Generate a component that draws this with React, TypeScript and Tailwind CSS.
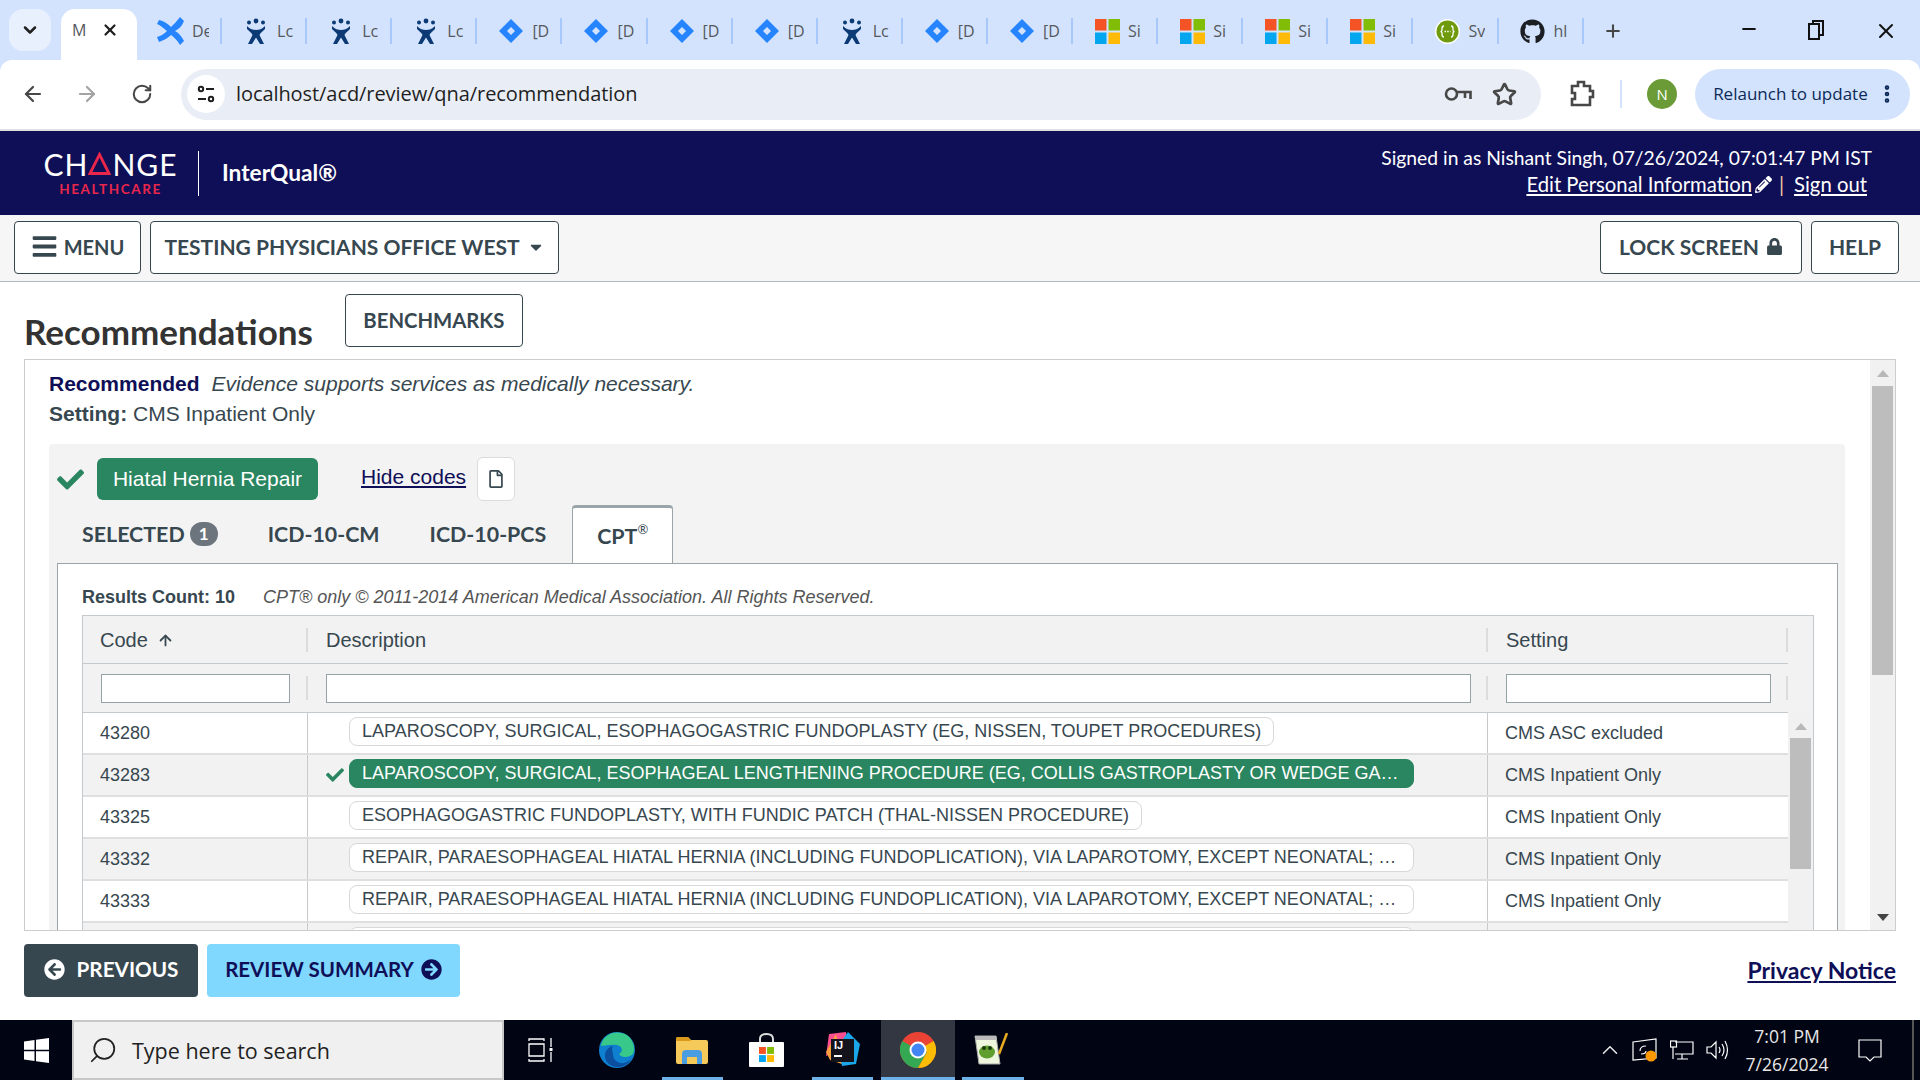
import {
  FaArrowCircleLeft,
  FaArrowCircleRight,
  FaBars,
  FaCaretDown,
  FaCheck,
  FaGithub,
  FaLock,
  FaPencilAlt,
  FaRegFile,
} from 'react-icons/fa';
import { ArrowLeft, ArrowRight, ChevronDown, MoreVertical, Plus, RotateCw, Star, X, Minus, ArrowUp, ChevronUp, Search } from 'lucide-react';

type IconKind = 'confluence' | 'figure' | 'jira' | 'ms' | 'swagger' | 'github';

const browserTabs: { icon: IconKind; label: string }[] = [
  { icon: 'confluence', label: 'De' },
  { icon: 'figure', label: 'Lc' },
  { icon: 'figure', label: 'Lc' },
  { icon: 'figure', label: 'Lc' },
  { icon: 'jira', label: '[D' },
  { icon: 'jira', label: '[D' },
  { icon: 'jira', label: '[D' },
  { icon: 'jira', label: '[D' },
  { icon: 'figure', label: 'Lc' },
  { icon: 'jira', label: '[D' },
  { icon: 'jira', label: '[D' },
  { icon: 'ms', label: 'Si' },
  { icon: 'ms', label: 'Si' },
  { icon: 'ms', label: 'Si' },
  { icon: 'ms', label: 'Si' },
  { icon: 'swagger', label: 'Sv' },
  { icon: 'github', label: 'hl' },
];

const repairText = 'REPAIR, PARAESOPHAGEAL HIATAL HERNIA (INCLUDING FUNDOPLICATION), VIA LAPAROTOMY, EXCEPT NEONATAL; WITHOUT IMPLANTATION OF MESH';

const rows = [
  { code: '43280', desc: 'LAPAROSCOPY, SURGICAL, ESOPHAGOGASTRIC FUNDOPLASTY (EG, NISSEN, TOUPET PROCEDURES)', setting: 'CMS ASC excluded' },
  { code: '43283', desc: 'LAPAROSCOPY, SURGICAL, ESOPHAGEAL LENGTHENING PROCEDURE (EG, COLLIS GASTROPLASTY OR WEDGE GASTROPLASTY)', setting: 'CMS Inpatient Only', selected: true, wide: true },
  { code: '43325', desc: 'ESOPHAGOGASTRIC FUNDOPLASTY, WITH FUNDIC PATCH (THAL-NISSEN PROCEDURE)', setting: 'CMS Inpatient Only' },
  { code: '43332', desc: repairText, setting: 'CMS Inpatient Only', wide: true },
  { code: '43333', desc: repairText, setting: 'CMS Inpatient Only', wide: true },
  { code: '43334', desc: repairText, setting: 'CMS Inpatient Only', wide: true },
];

function MsLogo({ size = 25 }: { size?: number }) {
  return (
    <svg width={size} height={size} viewBox="0 0 25 25">
      <rect width="11.5" height="11.5" fill="#f35325" />
      <rect x="13.5" width="11.5" height="11.5" fill="#81bc06" />
      <rect y="13.5" width="11.5" height="11.5" fill="#05a6f0" />
      <rect x="13.5" y="13.5" width="11.5" height="11.5" fill="#ffba08" />
    </svg>
  );
}

function Favicon({ kind }: { kind: IconKind }) {
  if (kind === 'ms') return <MsLogo />;
  if (kind === 'github') return <FaGithub className="text-[25px] text-[#1b1f23]" />;
  if (kind === 'jira') {
    return (
      <svg width="24" height="24" viewBox="0 0 24 24">
        <path d="M12 0 L24 12 L12 24 L0 12 Z" fill="#2684ff" />
        <path d="M12 8 L16 12 L12 16 L8 12 Z" fill="#d3e3fd" />
      </svg>
    );
  }
  if (kind === 'swagger') {
    return (
      <svg width="25" height="25" viewBox="0 0 25 25">
        <circle cx="12.5" cy="12.5" r="12.5" fill="#fff" />
        <circle cx="12.5" cy="12.5" r="11" fill="#6f9a0c" />
        <path d="M9 7 Q7 7 7 9.5 V11 Q7 12.5 5.5 12.5 Q7 12.5 7 14 V15.5 Q7 18 9 18 M16 7 Q18 7 18 9.5 V11 Q18 12.5 19.5 12.5 Q18 12.5 18 14 V15.5 Q18 18 16 18" fill="none" stroke="#fff" strokeWidth="1.3" />
        <path d="M9.5 12.5 H15.5" stroke="#fff" strokeWidth="1.5" strokeDasharray="1.5 1.2" />
      </svg>
    );
  }
  if (kind === 'figure') {
    return (
      <svg width="22" height="27" viewBox="0 0 22 27">
        <circle cx="11" cy="3" r="2.4" fill="#0b3a75" />
        <circle cx="4" cy="4.5" r="2" fill="#0b3a75" />
        <circle cx="18" cy="4.5" r="2" fill="#0b3a75" />
        <path d="M2 8 C5 11 8 12 11 12 C14 12 17 11 20 8 L20 11 C17 14 15 15 14.5 17 L19 26 H15 L11 19.5 L7 26 H3 L7.5 17 C7 15 5 14 2 11 Z" fill="#0b3a75" />
      </svg>
    );
  }
  return (
    <svg width="30" height="30" viewBox="0 0 30 30">
      <path d="M3 4 C8 5 12 8 15 11 C18 8 21 5 24 1 L28 5 C26 10 23 13 19 15 C23 17 26 21 28 25 L24 29 C21 24 18 21 15 19 C12 22 8 24 3 26 L1 21 C5 20 8 18 11 15 C7 12 4 9 1 8 Z" fill="#2684ff" />
    </svg>
  );
}

function BrowserTabs() {
  return (
    <div className="flex h-[60px] shrink-0 bg-[#d3e3fd] font-['Open_Sans',sans-serif] text-[16px] text-[#55585c]">
      <div className="ml-[9px] mt-[9px] flex h-[42px] w-[42px] items-center justify-center rounded-[14px] bg-[#e8f0fe]">
        <ChevronDown size={20} strokeWidth={3} className="text-[#1f1f1f]" />
      </div>
      <div className="ml-[10px] mt-[9px] flex h-[51px] w-[76px] items-start rounded-t-[14px] bg-white pl-[11px] pt-[9px]">
        <span>M</span>
        <X size={18} strokeWidth={3} className="ml-[15px] mt-[3px] text-[#1f1f1f]" />
      </div>
      <div className="flex pt-[18px]">
        {browserTabs.map((tab, i) => (
          <div key={i} className="flex h-[26px] w-[85.1px] items-center border-r-2 border-[#a8c7fa] pl-[19px]">
            <span className="flex w-[30px] shrink-0 justify-center">
              <Favicon kind={tab.icon} />
            </span>
            <span className="ml-[6px] w-[17px] overflow-hidden whitespace-nowrap">{tab.label}</span>
          </div>
        ))}
      </div>
      <Plus size={20} strokeWidth={2.5} className="ml-[19px] mt-[21px] text-[#444746]" />
      <div className="ml-auto flex pt-[19px]">
        <Minus size={20} strokeWidth={2.5} className="text-[#111]" />
        <svg width="20" height="22" viewBox="0 0 20 22" className="ml-[47px]" fill="none" stroke="#111" strokeWidth="2">
          <rect x="3" y="5" width="10" height="15" />
          <path d="M7 5 V2 H17 V16 H13" />
        </svg>
        <X size={24} strokeWidth={2} className="ml-[48px] mr-[22px] text-[#111]" />
      </div>
    </div>
  );
}

function BrowserToolbar() {
  return (
    <div className="shrink-0 bg-[#d3e3fd]">
      <div className="flex h-[69px] items-center rounded-t-[12px] bg-white pb-[1px] font-['Open_Sans',sans-serif] text-[#1f1f1f]">
        <ArrowLeft size={24} strokeWidth={2.2} className="ml-[21px] text-[#474747]" />
        <ArrowRight size={24} strokeWidth={2.2} className="ml-[30px] text-[#a3a3a3]" />
        <RotateCw size={22} strokeWidth={2.2} className="ml-[32px] text-[#474747]" />
        <div className="ml-[28px] flex h-[51px] w-[1361px] items-center rounded-full bg-[#e9eef6]">
          <div className="ml-[6px] flex h-[38px] w-[38px] items-center justify-center rounded-full bg-white">
            <svg width="20" height="20" viewBox="0 0 20 20" fill="none" stroke="#1f1f1f" strokeWidth="2">
              <circle cx="5" cy="5" r="2.2" />
              <path d="M10 5 H18 M2 15 H10" />
              <circle cx="15" cy="15" r="2.2" />
            </svg>
          </div>
          <span className="ml-[11px] text-[20px] tracking-[-0.07px]">localhost/acd/review/qna/recommendation</span>
          <svg width="28" height="16" viewBox="0 0 28 16" fill="none" stroke="#474747" strokeWidth="2.6" className="ml-auto mr-[20px]">
            <circle cx="7.5" cy="8" r="5.5" />
            <path d="M13 6 H26.5 V13 M21 7 V12" />
          </svg>
          <Star size={25} strokeWidth={2.6} className="mr-[24px] text-[#474747]" />
        </div>
        <svg width="26" height="28" viewBox="0 0 26 28" className="ml-[28px]" fill="none" stroke="#474747" strokeWidth="2.6">
          <path d="M3 6 H9 V2 H15 V6 H21 V11 H24 V17 H21 V25 H3 V19 H6 V13 H3 Z" />
        </svg>
        <div className="ml-[25px] h-[28px] w-[2px] bg-[#d3e3fd]" />
        <div className="ml-[25px] flex h-[30px] w-[30px] items-center justify-center rounded-full bg-[#6a9b36] text-[15px] text-white">N</div>
        <div className="ml-[18px] flex h-[51px] w-[215px] items-center rounded-full bg-[#d3e3fd] pl-[18px] text-[17px] text-[#0b2a57]">
          <span>Relaunch to update</span>
          <MoreVertical size={22} strokeWidth={3} className="ml-auto mr-[12px]" />
        </div>
        <div className="w-[10px]" />
      </div>
      <div className="h-[2px] bg-[#e0e0e0]" />
    </div>
  );
}

function AppHeader() {
  return (
    <header className="flex h-[84px] shrink-0 items-center bg-[#0f0f57] pl-[44px] font-['Lato',sans-serif] text-white">
      <div className="flex w-[133px] flex-col items-center">
        <div className="flex h-[26px] items-center text-[30px] leading-none tracking-[1px]">
          <span>CH</span>
          <svg width="23" height="23" viewBox="0 0 23 23" className="mr-[1px]" fill="none" stroke="#e8274a" strokeWidth="2.8">
            <path d="M11.5 2.5 L21 21.5 H2 Z" />
          </svg>
          <span>NGE</span>
        </div>
        <span className="mt-[5px] text-[13.5px] font-bold leading-[14px] tracking-[1.6px] text-[#e8274a]">HEALTHCARE</span>
      </div>
      <div className="ml-[21px] h-[45px] w-px bg-white" />
      <span className="ml-[23px] text-[22.7px] font-bold">InterQual®</span>
      <div className="ml-auto mr-[48px] flex flex-col items-end pb-[4px] text-[19.3px] leading-[26px]">
        <span>Signed in as Nishant Singh, 07/26/2024, 07:01:47 PM IST</span>
        <div className="mr-[5px] flex items-center text-[20.3px]">
          <span className="underline">Edit Personal Information</span>
          <FaPencilAlt className="ml-[3px] text-[17px]" />
          <span className="ml-[7px] mr-[10px] text-[#f0c9a0]">|</span>
          <span className="underline">Sign out</span>
        </div>
      </div>
    </header>
  );
}

function NavButton({ children, className }: { children: React.ReactNode; className: string }) {
  return (
    <button className={`flex h-[53px] items-center justify-center rounded-[4px] border border-[#37474f] bg-white pb-[2px] text-[21px] font-bold text-[#37474f] ${className}`}>
      {children}
    </button>
  );
}

function NavBar() {
  return (
    <nav className="flex h-[67px] shrink-0 items-center border-b border-[#b0b8bc] bg-[#f6f6f6] pb-[1px] font-['Lato',sans-serif]">
      <NavButton className="ml-[14px] w-[127px]">
        <FaBars className="mr-[6px] text-[27px]" />
        <span className="text-[20px]">MENU</span>
      </NavButton>
      <NavButton className="ml-[9px] w-[409px]">
        TESTING PHYSICIANS OFFICE WEST
        <FaCaretDown className="ml-[7px] text-[18px]" />
      </NavButton>
      <NavButton className="ml-auto w-[202px]">
        LOCK SCREEN
        <FaLock className="ml-[7px] text-[17px]" />
      </NavButton>
      <NavButton className="ml-[9px] mr-[21px] w-[88px]">HELP</NavButton>
    </nav>
  );
}

function InnerScrollbar() {
  return (
    <div className="h-[270px] w-[25px] shrink-0 bg-[#f1f1f1]">
      <div className="mx-auto mt-[10px] h-0 w-0 border-x-[6px] border-b-[7px] border-x-transparent border-b-[#b8b8b8]" />
      <div className="mx-auto mt-[8px] h-[131px] w-[21px] bg-[#bdbdbd]" />
    </div>
  );
}

function ResultsTable() {
  return (
    <div className="ml-[24px] mr-[23px] mt-[5px] border border-b-0 border-[#c3c9cc] bg-[#f2f2f2] font-['Liberation_Sans',sans-serif] text-[18px] text-[#37474f]">
      <div className="mr-[25px] flex h-[48px] items-center border-b border-[#c3c9cc] text-[20px]">
        <div className="flex h-[24px] w-[225px] items-center border-r-2 border-[#dcdcdc] pl-[17px]">
          Code
          <ArrowUp size={17} strokeWidth={2.5} className="ml-[9px] mt-[1px]" />
        </div>
        <div className="flex h-[24px] w-[1180px] items-center border-r-2 border-[#dcdcdc] pl-[18px]">Description</div>
        <div className="flex h-[24px] w-[300px] items-center border-r-2 border-[#dcdcdc] pl-[18px]">Setting</div>
      </div>
      <div className="mr-[25px] flex h-[49px] items-center border-b border-[#c3c9cc]">
        <div className="flex h-[24px] w-[225px] items-center border-r-2 border-[#dcdcdc] pl-[18px]">
          <div className="h-[29px] w-[189px] shrink-0 border border-[#93a3a6] bg-white" />
        </div>
        <div className="flex h-[24px] w-[1180px] items-center border-r-2 border-[#dcdcdc] pl-[18px]">
          <div className="h-[29px] w-[1145px] shrink-0 border border-[#93a3a6] bg-white" />
        </div>
        <div className="flex h-[24px] w-[300px] items-center border-r-2 border-[#dcdcdc] pl-[18px]">
          <div className="h-[29px] w-[265px] shrink-0 border border-[#93a3a6] bg-white" />
        </div>
      </div>
      <div className="flex">
        <div>
          {rows.map((row, i) => (
            <div key={row.code} className={`flex h-[42px] w-[1705px] border-b-2 border-[#dfdfdf] ${i % 2 === 0 ? 'bg-white' : 'bg-[#f2f2f2]'}`}>
              <div className="w-[225px] border-r border-[#c9c9c9] pl-[17px] pt-[7px] leading-[27px]">{row.code}</div>
              <div className="flex w-[1180px] items-start border-r border-[#c9c9c9] pl-[18px] pt-[4px]">
                <span className="w-[23px] pt-[7px] text-[18px] text-[#2a8660]">{row.selected && <FaCheck />}</span>
                <span
                  className={`truncate rounded-[8px] border px-[12px] leading-[27px] ${row.wide ? 'w-[1065px]' : ''} ${
                    row.selected ? 'border-[#2a8660] bg-[#2a8660] text-white' : 'border-[#d8d8d8] bg-white'
                  }`}
                >
                  {row.desc}
                </span>
              </div>
              <div className="w-[300px] pl-[17px] pt-[7px] leading-[27px]">{row.setting}</div>
            </div>
          ))}
        </div>
        <InnerScrollbar />
      </div>
    </div>
  );
}

function Recommendations() {
  return (
    <div className="h-[570px] min-w-0 flex-1 overflow-hidden pl-[24px] pr-[25px] pt-[9px] font-['Liberation_Sans',sans-serif] text-[21px] leading-[30px] text-[#37474f]">
      <p>
        <strong className="text-[#0f0f57]">Recommended</strong>
        <em className="ml-[12px]">Evidence supports services as medically necessary.</em>
      </p>
      <p>
        <strong>Setting:</strong> CMS Inpatient Only
      </p>
      <div className="mt-[15px] rounded-[4px] bg-[#f3f3f3] pl-[8px] pr-[7px] pt-[13px]">
        <div className="flex h-[44px] items-center">
          <FaCheck className="text-[27px] text-[#2a8660]" />
          <span className="ml-[13px] flex h-[42px] w-[221px] items-center justify-center rounded-[6px] bg-[#2a8660] text-white">Hiatal Hernia Repair</span>
          <a className="ml-[43px] mb-[4px] text-[#0f0f57] underline">Hide codes</a>
          <span className="ml-[11px] flex h-[44px] w-[38px] items-center justify-center rounded-[6px] border border-[#dcdcdc] bg-white">
            <FaRegFile className="text-[18px] text-[#37474f]" />
          </span>
        </div>
        <div className="relative z-10 -mb-px mt-[5px] flex h-[58px] items-center pb-[2px] pl-[25px] font-['Lato',sans-serif] text-[21.4px] font-bold">
          <span>SELECTED</span>
          <span className="ml-[5px] flex h-[24px] w-[28px] items-center justify-center rounded-full bg-[#6c757d] text-[17px] text-white">1</span>
          <span className="ml-[50px]">ICD-10-CM</span>
          <span className="ml-[50px]">ICD-10-PCS</span>
          <span className="ml-[26px] flex h-[58px] w-[101px] items-center justify-center rounded-t-[4px] border border-b-0 border-[#9aa5a9] border-t-[3px] bg-white">
            CPT<sup className="text-[13px] font-normal">®</sup>
          </span>
        </div>
        <div className="h-[400px] border border-[#9aa5a9] bg-white pt-[20px]">
          <div className="flex items-center pl-[24px] text-[18px] leading-[26px]">
            <strong>Results Count: 10</strong>
            <em className="ml-[28px] text-[#555]">CPT® only © 2011-2014 American Medical Association. All Rights Reserved.</em>
          </div>
          <ResultsTable />
        </div>
      </div>
    </div>
  );
}

function OuterScrollbar() {
  return (
    <div className="w-[25px] shrink-0 bg-[#f1f1f1]">
      <div className="mx-auto mt-[10px] h-0 w-0 border-x-[6px] border-b-[7px] border-x-transparent border-b-[#b8b8b8]" />
      <div className="mx-auto mt-[9px] h-[289px] w-[21px] bg-[#bdbdbd]" />
      <div className="mx-auto mt-[239px] h-0 w-0 border-x-[6px] border-t-[7px] border-x-transparent border-t-[#444]" />
    </div>
  );
}

function MainContent() {
  return (
    <main className="flex min-h-0 flex-1 flex-col bg-white px-[24px]">
      <div className="flex h-[77px] shrink-0 items-start">
        <h1 className="mt-[30px] font-['Lato',sans-serif] text-[35px] font-bold leading-[38px] text-[#333]">Recommendations</h1>
        <button className="ml-[32px] mt-[12px] h-[53px] w-[178px] rounded-[4px] border border-[#37474f] pb-[1px] font-['Lato',sans-serif] text-[20.3px] font-bold text-[#37474f]">BENCHMARKS</button>
      </div>
      <div className="flex h-[572px] shrink-0 border border-[#cccccc]">
        <Recommendations />
        <OuterScrollbar />
      </div>
      <div className="mt-[13px] flex items-center font-['Lato',sans-serif] text-[21px] font-bold">
        <button className="flex h-[53px] w-[174px] items-center justify-center rounded-[4px] bg-[#37474f] pb-[2px] text-[20.7px] text-white">
          <FaArrowCircleLeft className="mr-[12px] text-[21px]" />
          PREVIOUS
        </button>
        <button className="ml-[9px] flex h-[53px] w-[253px] items-center justify-center rounded-[4px] bg-[#80d8ff] pb-[2px] text-[20.5px] text-[#0f0f57]">
          REVIEW SUMMARY
          <FaArrowCircleRight className="ml-[7px] text-[21px]" />
        </button>
        <a className="ml-auto text-[23px] text-[#0f0f57] underline">Privacy Notice</a>
      </div>
    </main>
  );
}

function ChromeIcon() {
  return (
    <svg width="36" height="36" viewBox="0 0 36 36">
      <circle cx="18" cy="18" r="18" fill="#ea4335" />
      <path d="M18 18 L2.4 9 A18 18 0 0 0 18 36 L27 20 Z" fill="#34a853" />
      <path d="M18 18 L33.6 9 A18 18 0 0 1 18 36 L27 20 Z" fill="#fbbc04" />
      <circle cx="18" cy="18" r="8.5" fill="#fff" />
      <circle cx="18" cy="18" r="6.5" fill="#4285f4" />
    </svg>
  );
}

function Taskbar() {
  return (
    <footer className="flex h-[60px] shrink-0 items-stretch bg-[#010412] font-['Open_Sans',sans-serif] text-white">
      <div className="flex w-[72px] items-center justify-center">
        <svg width="25" height="25" viewBox="0 0 25 25" fill="#fff">
          <path d="M0 3.5 L10.5 2 V11.8 H0 Z M12 1.8 L25 0 V11.8 H12 Z M0 13.2 H10.5 V23 L0 21.5 Z M12 13.2 H25 V25 L12 23.2 Z" />
        </svg>
      </div>
      <div className="flex w-[432px] items-center border-2 border-[#c8c8c8] bg-[#f0f0f0] pl-[14px] text-[21.5px] text-[#222]">
        <Search size={30} strokeWidth={1.4} className="-scale-x-100" />
        <span className="ml-[14px] pt-[2px]">Type here to search</span>
      </div>
      <div className="relative flex w-[528px] items-center">
        <svg width="25" height="24" viewBox="0 0 25 24" fill="none" stroke="#fff" strokeWidth="1.3" className="absolute left-[24px]">
          <path d="M1 3 V1 H16 V3 M1 21 V23 H16 V21 M1 6 H16 V18 H1 Z M23 0 V9 M23 14 V24" />
          <rect x="21.5" y="10" width="3" height="3" fill="#fff" stroke="none" />
        </svg>
        <svg width="36" height="36" viewBox="0 0 36 36" className="absolute left-[95px]">
          <circle cx="18" cy="18" r="18" fill="#0f7fd0" />
          <path d="M2 14 C4 2 16 -2 26 2 C34 6 37 16 34 22 C30 26 22 26 20 22 C24 20 24 14 18 13 C10 12 5 14 2 14 Z" fill="#38c98a" />
          <path d="M14 22 C14 32 26 34 32 27 C28 36 14 38 8 30 C4 24 6 16 14 14 C12 17 14 20 14 22 Z" fill="#0b4f9e" />
        </svg>
        <svg width="32" height="27" viewBox="0 0 32 27" className="absolute left-[172px]">
          <path d="M0 2 Q0 0 2 0 H12 L15 3 H30 Q32 3 32 5 V25 Q32 27 30 27 H2 Q0 27 0 25 Z" fill="#f6c95b" />
          <path d="M0 2 Q0 0 2 0 H12 L15 4 H0 Z" fill="#d99a1c" />
          <path d="M6 27 V17 Q6 13 10 13 H22 Q26 13 26 17 V27 H21 V20 H11 V27 Z" fill="#4a9de0" />
        </svg>
        <svg width="35" height="34" viewBox="0 0 35 34" className="absolute left-[245px]">
          <path d="M11 9 V6 Q11 1 17.5 1 Q24 1 24 6 V9" fill="none" stroke="#ddd" strokeWidth="2" />
          <rect y="9" width="35" height="25" rx="1" fill="#fff" />
          <g transform="translate(10 14)">
            <MsLogo size={15} />
          </g>
        </svg>
        <svg width="36" height="36" viewBox="0 0 36 36" className="absolute left-[320px]">
          <path d="M5 2 L22 0 L24 14 L2 24 Z" fill="#fc4f8d" />
          <path d="M2 20 L12 2 L18 32 L6 28 Z" fill="#f9a03f" />
          <path d="M24 0 L36 12 L32 32 L18 34 L14 14 Z" fill="#1aa6e8" />
        </svg>
        <div className="absolute left-[327px] top-[19px] flex h-[23px] w-[23px] flex-col bg-[#14121a] pl-[3px] font-['Liberation_Sans',sans-serif] text-[11px] font-bold leading-[13px] text-white">
          <span>IJ</span>
          <span className="mt-[3px] h-[2px] w-[8px] bg-white" />
        </div>
        <div className="absolute left-[377px] top-0 flex h-full w-[74px] items-center justify-center bg-[#333741]">
          <ChromeIcon />
        </div>
        <svg width="34" height="34" viewBox="0 0 34 34" className="absolute left-[470px]">
          <path d="M1 3 H22 L26 31 H5 Z" fill="#eef6dd" stroke="#aaa" />
          <path d="M1 3 H22 L23 7 H2 Z" fill="#bbb" />
          <ellipse cx="13" cy="19" rx="8" ry="6.5" fill="#5f9e2f" />
          <circle cx="10" cy="15" r="2" fill="#1d3d10" />
          <circle cx="16" cy="15" r="2" fill="#1d3d10" />
          <path d="M33 0 L25 21" stroke="#e6a91f" strokeWidth="2.5" />
        </svg>
        <div className="absolute bottom-0 left-[158px] h-[3px] w-[61px] bg-[#6cb1e8]" />
        <div className="absolute bottom-0 left-[308px] h-[3px] w-[61px] bg-[#6cb1e8]" />
        <div className="absolute bottom-0 left-[377px] h-[3px] w-[74px] bg-[#6cb1e8]" />
        <div className="absolute bottom-0 left-[458px] h-[3px] w-[62px] bg-[#6cb1e8]" />
      </div>
      <div className="ml-auto flex items-center text-[#e8e8e8]">
        <ChevronUp size={26} strokeWidth={1.4} />
        <svg width="26" height="24" viewBox="0 0 26 24" fill="none" stroke="#fff" strokeWidth="1.2" className="ml-[9px]">
          <path d="M1 4 L24 1 V20 L1 22 Z" />
          <path d="M8 13 Q8 8 14 8 M14 13 Q14 16 9 16" />
          <circle cx="19" cy="18" r="5.5" fill="#ff9800" stroke="none" />
        </svg>
        <svg width="24" height="21" viewBox="0 0 24 21" fill="none" stroke="#fff" strokeWidth="1.2" className="ml-[12px]">
          <path d="M5 2 H23 V14 H5 M12 14 V19 M7 19 H18 M3 7 V19" />
          <rect x="0.5" y="1" width="6" height="6" />
        </svg>
        <svg width="23" height="20" viewBox="0 0 23 20" fill="none" stroke="#fff" strokeWidth="1.2" className="ml-[12px]">
          <path d="M1 7 H5 L10 2 V18 L5 13 H1 Z M13 7 Q15 10 13 13 M16 4 Q20 10 16 16 M19 1 Q24 10 19 19" />
        </svg>
        <div className="ml-[3px] flex w-[110px] flex-col items-center text-[17.5px] leading-[28px]">
          <span>7:01 PM</span>
          <span>7/26/2024</span>
        </div>
        <svg width="24" height="24" viewBox="0 0 24 24" fill="none" stroke="#fff" strokeWidth="1.2" className="ml-[16px]">
          <path d="M1 2 H23 V19 H16 L12 23 L8 19 H1 Z" />
        </svg>
        <div className="ml-[30px] h-full w-[2px] bg-[#555]" />
        <div className="w-[6px]" />
      </div>
    </footer>
  );
}

export default function App() {
  return (
    <div className="flex h-screen w-full flex-col overflow-hidden bg-white">
      <BrowserTabs />
      <BrowserToolbar />
      <AppHeader />
      <NavBar />
      <MainContent />
      <Taskbar />
    </div>
  );
}
